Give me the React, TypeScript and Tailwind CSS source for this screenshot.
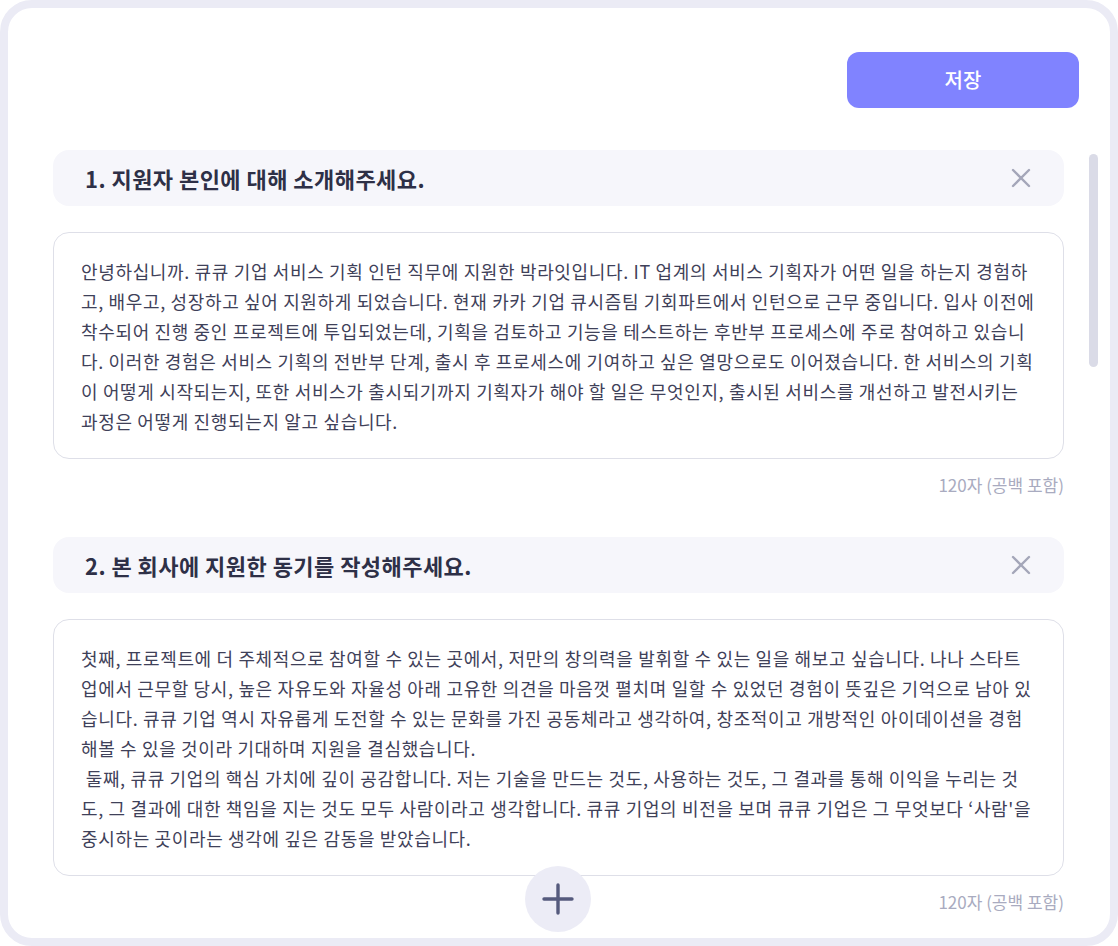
import React from "react";

const answer1 = [
  "안녕하십니까. 큐큐 기업 서비스 기획 인턴 직무에 지원한 박라잇입니다. IT 업계의 서비스 기획자가 어떤 일을 하는지 경험하",
  "고, 배우고, 성장하고 싶어 지원하게 되었습니다. 현재 카카 기업 큐시즘팀 기회파트에서 인턴으로 근무 중입니다. 입사 이전에",
  "착수되어 진행 중인 프로젝트에 투입되었는데, 기획을 검토하고 기능을 테스트하는 후반부 프로세스에 주로 참여하고 있습니",
  "다. 이러한 경험은 서비스 기획의 전반부 단계, 출시 후 프로세스에 기여하고 싶은 열망으로도 이어졌습니다. 한 서비스의 기획",
  "이 어떻게 시작되는지, 또한 서비스가 출시되기까지 기획자가 해야 할 일은 무엇인지, 출시된 서비스를 개선하고 발전시키는",
  "과정은 어떻게 진행되는지 알고 싶습니다.",
];

const answer2 = [
  "첫째, 프로젝트에 더 주체적으로 참여할 수 있는 곳에서, 저만의 창의력을 발휘할 수 있는 일을 해보고 싶습니다. 나나 스타트",
  "업에서 근무할 당시, 높은 자유도와 자율성 아래 고유한 의견을 마음껏 펼치며 일할 수 있었던 경험이 뜻깊은 기억으로 남아 있",
  "습니다. 큐큐 기업 역시 자유롭게 도전할 수 있는 문화를 가진 공동체라고 생각하여, 창조적이고 개방적인 아이데이션을 경험",
  "해볼 수 있을 것이라 기대하며 지원을 결심했습니다.",
  " 둘째, 큐큐 기업의 핵심 가치에 깊이 공감합니다. 저는 기술을 만드는 것도, 사용하는 것도, 그 결과를 통해 이익을 누리는 것",
  "도, 그 결과에 대한 책임을 지는 것도 모두 사람이라고 생각합니다. 큐큐 기업의 비전을 보며 큐큐 기업은 그 무엇보다 ‘사람'을",
  "중시하는 곳이라는 생각에 깊은 감동을 받았습니다.",
];

function CloseIcon() {
  return (
    <svg width="20" height="20" viewBox="0 0 20 20" fill="none">
      <path d="M2 2 L18 18 M18 2 L2 18" stroke="#a4a6b9" strokeWidth="2.4" strokeLinecap="round" />
    </svg>
  );
}

function Question({ title, lines, first }: { title: string; lines: string[]; first?: boolean }) {
  return (
    <section className={first ? "" : "mt-[42px]"}>
      <div className="flex h-[56px] items-center justify-between rounded-[16px] bg-[#f6f6fb] pl-[32px] pr-[32px]">
        <h2 className="text-[22px] font-bold tracking-[0.45px] text-[#2e3047]">{title}</h2>
        <button className="flex h-[22px] w-[22px] items-center justify-center">
          <CloseIcon />
        </button>
      </div>
      <div className="mt-[26px] rounded-[16px] border border-[#dedfe8] bg-white px-[27px] pb-[22px] pt-[23px]">
        {lines.map((l, i) => (
          <p
            key={i}
            className="whitespace-pre text-[18px] leading-[30px] tracking-[0.65px] text-[#3f4159]"
          >
            {l}
          </p>
        ))}
      </div>
      <p className="mt-[16px] text-right text-[17px] leading-[20px] text-[#a9abc0]">
        120자 (공백 포함)
      </p>
    </section>
  );
}

export default function App() {
  return (
    <div
      className="relative h-[946px] w-[1118px] overflow-hidden rounded-[32px] border-8 border-[#ebebf5] bg-white"
      style={{ fontFamily: '"Noto Sans CJK KR", "Noto Sans", sans-serif' }}
    >
      <div className="flex justify-end pr-[31px] pt-[44px]">
        <button className="flex h-[56px] w-[232px] items-center justify-center rounded-[12px] bg-[#8083ff] text-[20px] font-medium text-white">
          저장
        </button>
      </div>
      <div className="relative mt-[42px] pl-[45px] pr-[46px]">
        <Question first title="1. 지원자 본인에 대해 소개해주세요." lines={answer1} />
        <Question title="2. 본 회사에 지원한 동기를 작성해주세요." lines={answer2} />
      </div>
      {/* scrollbar thumb */}
      <div className="absolute left-[1081px] top-[146px] h-[213px] w-[9px] rounded-full bg-[#dadbe7]" />
      {/* add button */}
      <button className="absolute left-[517px] top-[858px] flex h-[66px] w-[66px] items-center justify-center rounded-full bg-[#ececf6]">
        <svg width="34" height="34" viewBox="0 0 34 34" fill="none">
          <path d="M17 3 V31 M3 17 H31" stroke="#555a7d" strokeWidth="3.4" strokeLinecap="round" />
        </svg>
      </button>
    </div>
  );
}
